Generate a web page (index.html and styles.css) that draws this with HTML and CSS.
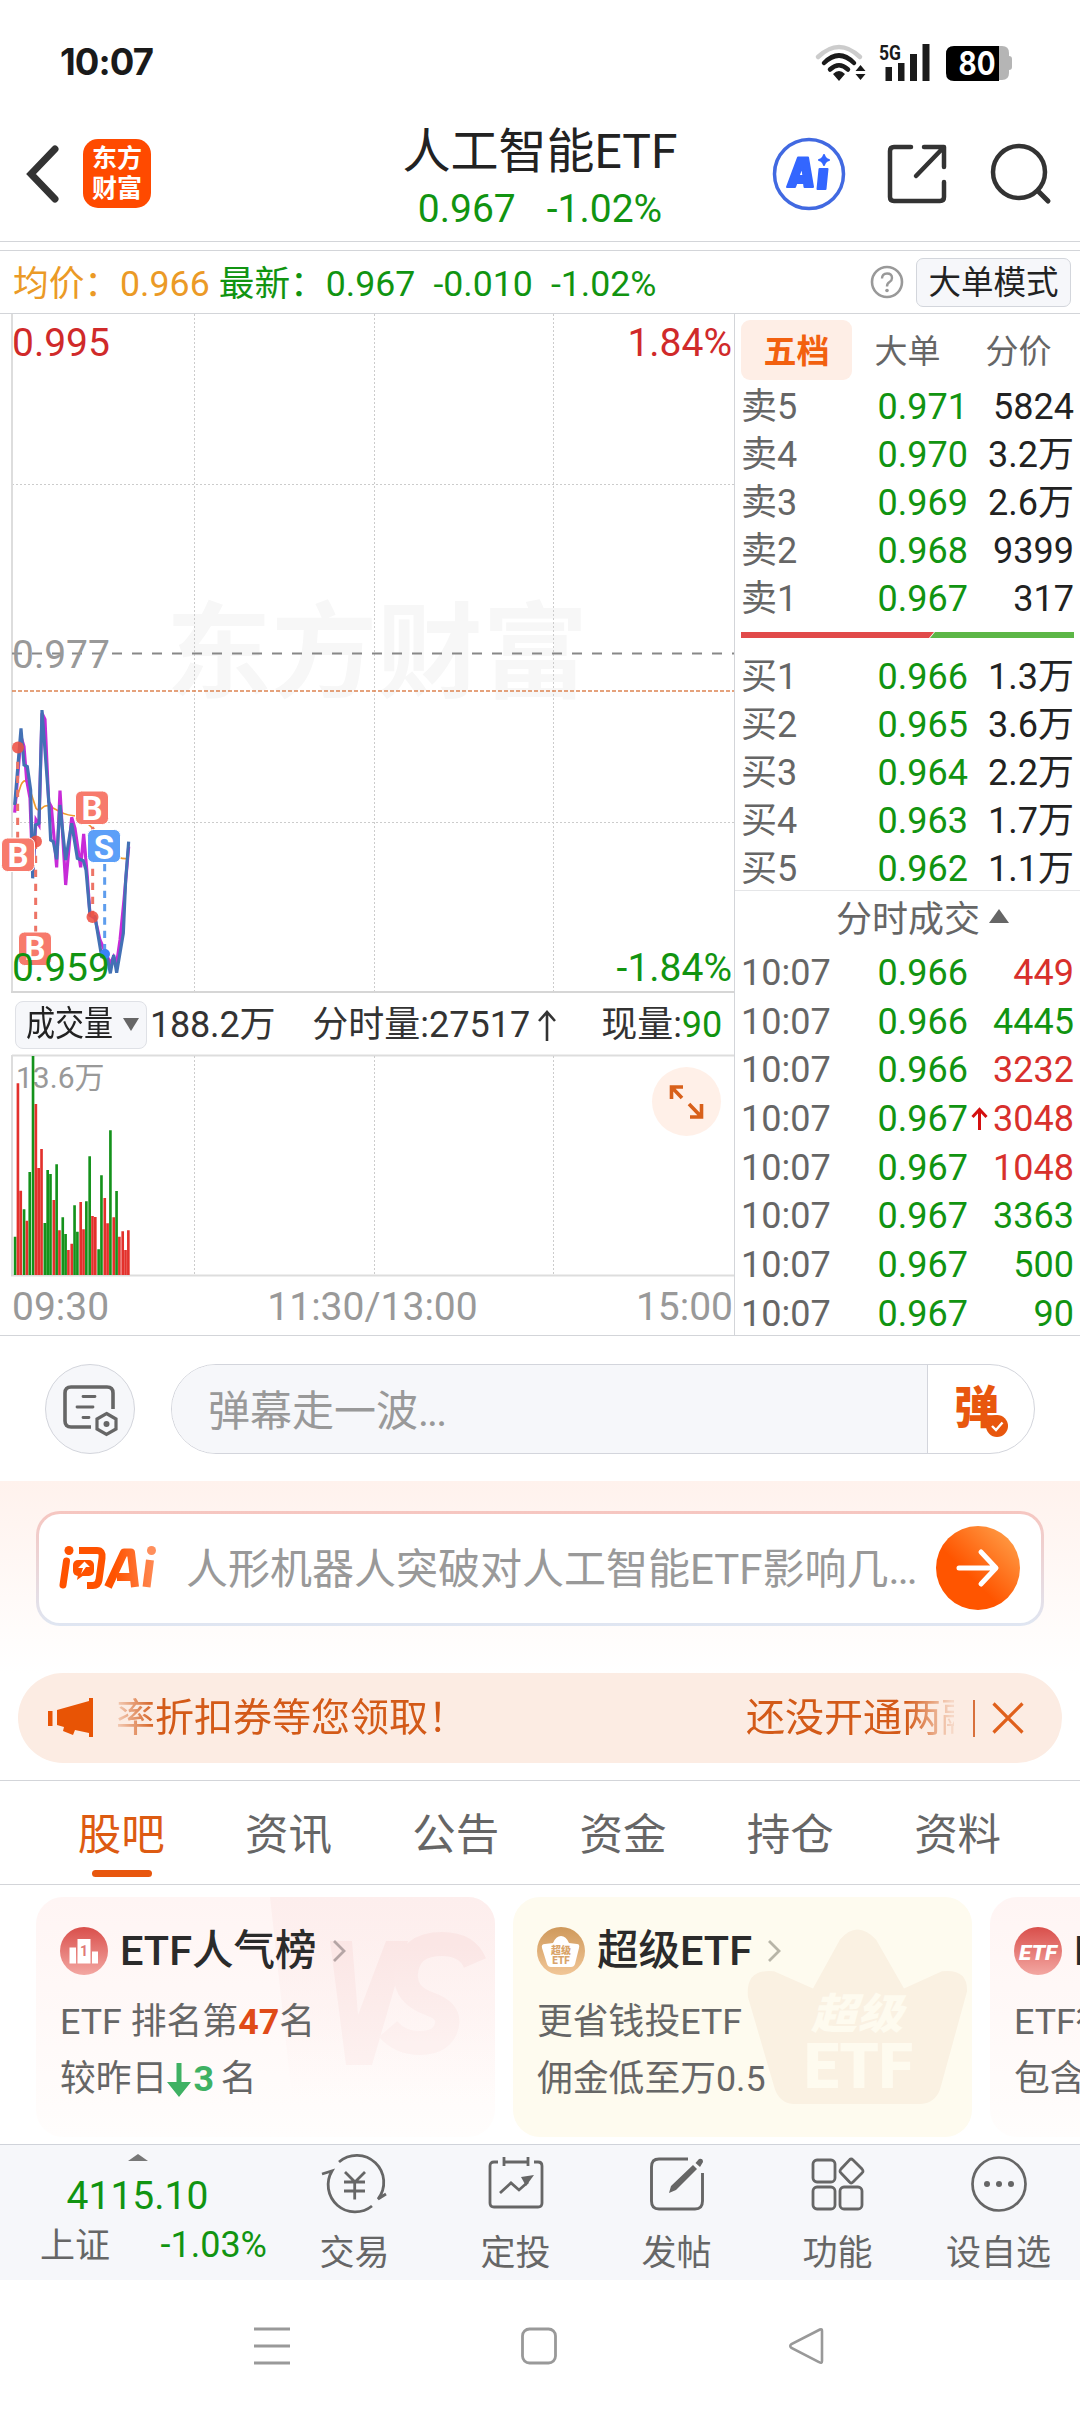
FILE: index.html
```html
<!DOCTYPE html>
<html lang="zh-CN">
<head>
<meta charset="utf-8">
<title>人工智能ETF</title>
<link rel="stylesheet" href="styles.css">
</head>
<body>
<div class="statusbar">
  <span class="clock">10:07</span>
  <svg class="status-icons" width="200" height="40" viewBox="0 0 200 40">
    <g fill="none" stroke-linecap="round" stroke-width="4.5">
      <path d="M4 14Q25-6 46 14" stroke="#ccc"/>
      <path d="M10 20Q25 5 40 20M16 26.500Q25 18 34 26.500" stroke="#1a1a1a"/>
    </g>
    <path d="M19 31Q25 25 31 31L25 38ZM41.500 28L46.500 22 51.500 28ZM41.500 31L46.500 37 51.500 31Z" fill="#1a1a1a"/>
    <text x="65" y="17" class="net" textLength="22" lengthAdjust="spacingAndGlyphs">5G</text>
    <path d="M71.500 24h6.500v14h-6.500zM84 20h6.500v18h-6.500zM96 11h7v27h-7zM108.500 1h7v37h-7z" fill="#1a1a1a"/>
    <path d="M184 3h4q7 0 7 7v3q3 0 3 3v8q0 3-3 3v3q0 7-7 7h-4z" fill="#b5b5b5"/>
    <path d="M140 3h45v35h-45q-8 0-8-8v-19q0-8 8-8z"/>
    <text x="144.500" y="31.500" class="batt" textLength="37" lengthAdjust="spacingAndGlyphs">80</text>
  </svg>
</div>

<header class="header">
  <div class="header-left">
    <svg width="36" height="60" viewBox="0 0 36 60"><path d="M31 5L7 30 31 55" fill="none" stroke="#333" stroke-width="7" stroke-linecap="round"/></svg>
    <div class="logo">东方<br>财富</div>
  </div>
  <div class="title">
    <h1>人工智能ETF</h1>
    <div class="title-quote"><span>0.967</span><span>-1.02%</span></div>
  </div>
  <div class="header-right">
    <svg width="74" height="76" viewBox="0 0 74 76">
      <circle cx="37" cy="38" r="34.500" fill="#fff" stroke="#4169e1" stroke-width="3.500"/>
      <g fill="#3366ff" stroke="#3366ff" stroke-width="2" stroke-linejoin="round">
        <path fill-rule="evenodd" d="M26 21.500H36L41 51H32.500L32 47H24.500L23 51H15ZM30 31L26.500 40H31.500Z"/>
        <path d="M47.500 33H55.500L53.500 53H45.500Z"/>
        <path d="M52 19Q53 23 57 24 53 25 52 29 51 25 47 24 51 23 52 19Z"/>
      </g>
    </svg>
    <svg width="60" height="60" viewBox="0 0 60 60"><path d="M24 3H7Q3 3 3 7V53Q3 57 7 57H53Q57 57 57 53V38M37 3H57V23M56 4L29 32" fill="none" stroke="#333" stroke-width="4.500" stroke-linecap="round" stroke-linejoin="round"/></svg>
    <svg width="62" height="64" viewBox="0 0 62 64"><circle cx="31" cy="30" r="26" fill="none" stroke="#333" stroke-width="4.500"/><path d="M50 49L60 59" stroke="#333" stroke-width="5" stroke-linecap="round"/></svg>
  </div>
</header>

<div class="summary">
  <span class="avg">均价：0.966</span>
  <span class="latest">最新：0.967</span>
  <span>-0.010</span>
  <span>-1.02%</span>
  <svg class="help" width="34" height="34" viewBox="0 0 34 34"><circle cx="17" cy="17" r="15" fill="none" stroke="#999" stroke-width="2.600"/><path d="M12 13.500Q12 8.500 17 8.500T22 13Q22 15.500 19.500 17T17 21.500" fill="none" stroke="#999" stroke-width="2.400"/><circle cx="17" cy="25.500" r="1.800" fill="#999"/></svg>
  <span class="mode">大单模式</span>
</div>

<main class="market">
  <section class="charts">
    <svg class="price-chart" width="734" height="680" viewBox="0 314 734 680">
      <text x="166" y="690" class="watermark" textLength="422" lengthAdjust="spacingAndGlyphs">东方财富</text>
      <g stroke="#ccc" stroke-dasharray="2 2">
        <path d="M194.500 314V992M374.500 314V992M553.500 314V992M12 484.500H734M12 822.500H734"/>
      </g>
      <path d="M12 314V992" stroke="#ddd" stroke-width="2"/>
      <path d="M11 992H734" stroke="#d6d6d6" stroke-width="2"/>
      <path d="M12 653.500H734" stroke="#888" stroke-width="1.800" stroke-dasharray="10 10"/>
      <path d="M12 691H734" stroke="#dd8452" stroke-width="1.600" stroke-dasharray="4 2"/>
      <g fill="none" transform="translate(0 580) scale(.33333)">
        <path d="M50 655L63 615Q75 590 85 615L108 685Q115 695 125 685 140 670 155 682L180 695Q200 708 240 708L278 745 310 765 340 820Q355 837 380 836" stroke="#f09a2c" stroke-width="5"/>
        <path d="M44 698L63 470 72 500 80 600 90 655 98 880 108 720 117 735 126 400 135 418 146 665 154 680 170 862 180 632 197 915 215 712 225 745 242 862 251 762 262 890 270 1005 285 1015 300 1080 322 1130 331 1150 341 1130 350 1150 360 1080 372 960 386 800" stroke="#c72bd8" stroke-width="9.500"/>
        <path d="M44 675L63 445 72 555 82 560 92 630 98 895 106 735 117 730 126 390 146 660 152 780 160 785 170 838 180 675 197 840 215 730 232 835 250 842 258 870 270 1005 285 1010 305 1130 322 1135 331 1180 341 1125 350 1178 370 1060 377 900 386 785" stroke="#4371b5" stroke-width="9.500"/>
        <g stroke="#ed7466" stroke-width="9" stroke-dasharray="22 20">
          <path d="M53 545V775M107 785V1060M278 740V1010"/>
        </g>
        <path d="M314 852V1110" stroke="#5e9ded" stroke-width="9" stroke-dasharray="22 18"/>
      </g>
      <g fill="#ee5144" opacity=".88"><circle cx="18" cy="747.500" r="6"/><circle cx="36" cy="841.500" r="6"/><circle cx="92.500" cy="917" r="6"/></g>
      <circle cx="105" cy="954" r="5" fill="#3b82f6"/>
      <g class="badge">
        <rect x="1.500" y="838" width="33" height="33.500" rx="6"/><text x="18" y="867">B</text>
        <rect x="18.500" y="932" width="33" height="33.500" rx="6"/><text x="35" y="960">B</text>
        <rect x="75.500" y="791" width="33" height="33.500" rx="6"/><text x="92" y="820">B</text>
        <rect x="87.500" y="829.500" width="33" height="33" rx="6" class="sell"/><text x="104" y="858.500">S</text>
      </g>
      <text x="12" y="355.500" class="axis red">0.995</text>
      <text x="732" y="355.500" class="axis red end">1.84%</text>
      <text x="12" y="668" class="axis gray">0.977</text>
      <text x="12" y="981" class="axis green">0.959</text>
      <text x="732" y="981" class="axis green end">-1.84%</text>
    </svg>
    <div class="indicator">
      <div class="picker"><b>成交量</b><i></i></div>
      <span class="v1">188.2万</span><span class="v2">分时量:27517<svg width="20" height="32" viewBox="0 0 20 32"><path d="M10 31V3M2 11L10 2 18 11" fill="none" stroke="#333" stroke-width="2.600"/></svg></span><span>现量:<em class="green">90</em></span>
    </div>
    <svg class="volume-chart" width="734" height="222" viewBox="0 1055 734 222">
      <path d="M12 1055.500H734" stroke="#ddd" stroke-width="2"/>
      <path d="M194.500 1056V1275M374.500 1056V1275M553.500 1056V1275" stroke="#ccc" stroke-dasharray="2 2"/>
      <path d="M12 1055V1275" stroke="#ddd" stroke-width="2"/>
      <path d="M11 1275.500H734" stroke="#ddd" stroke-width="2"/>
      <text x="16" y="1088" class="vol-max">13.6万</text>
      <g fill="none" stroke-width="5.600" transform="translate(0 980) scale(.4719 .33333)">
        <path stroke="#14921b" d="M32 770V885M51 688V885M63 576V885M70 228V885M95 729V885M101 570V885M107 582V885M120 553V885M133 712V885M139 762V885M158 676V885M164 755V885M183 664V885M190 529V885M209 808V885M215 586V885M234 451V885M247 633V885"/>
        <path stroke="#e3312c" d="M38 310V885M44 632V885M57 722V885M76 372V885M82 564V885M88 507V885M114 660V885M126 751V885M145 810V885M152 791V885M171 666V885M177 748V885M196 708V885M202 711V885M222 654V885M228 730V885M241 712V885M253 770V885M260 754V885M266 810V885M272 751V885"/>
      </g>
      <circle cx="686.500" cy="1101.500" r="34.500" fill="#fff0e8"/>
      <path d="M683 1087H671.500V1099M671.500 1087L682 1098M690 1117H701.500V1104M701.500 1117L689 1104" fill="none" stroke="#d8601a" stroke-width="3.600"/>
    </svg>
    <div class="times"><span>09:30</span><span>11:30/13:00</span><span>15:00</span></div>
  </section>

  <aside class="book">
    <div class="book-tabs"><span class="on">五档</span><span>大单</span><span>分价</span></div>
    <div class="levels">
      <div><span>卖5</span><b>0.971</b><em>5824</em></div>
      <div><span>卖4</span><b>0.970</b><em>3.2万</em></div>
      <div><span>卖3</span><b>0.969</b><em>2.6万</em></div>
      <div><span>卖2</span><b>0.968</b><em>9399</em></div>
      <div><span>卖1</span><b>0.967</b><em>317</em></div>
    </div>
    <svg class="ratio" width="333" height="6" viewBox="0 0 333 6"><path d="M0 0H193L188 6H0Z" fill="#e14a4a"/><path d="M194 0H333V6H189Z" fill="#5cb646"/></svg>
    <div class="levels buys">
      <div><span>买1</span><b>0.966</b><em>1.3万</em></div>
      <div><span>买2</span><b>0.965</b><em>3.6万</em></div>
      <div><span>买3</span><b>0.964</b><em>2.2万</em></div>
      <div><span>买4</span><b>0.963</b><em>1.7万</em></div>
      <div><span>买5</span><b>0.962</b><em>1.1万</em></div>
    </div>
    <div class="deals-title">分时成交<i></i></div>
    <div class="levels deals">
      <div><span>10:07</span><b>0.966</b><em class="red">449</em></div>
      <div><span>10:07</span><b>0.966</b><em class="green">4445</em></div>
      <div><span>10:07</span><b>0.966</b><em class="red">3232</em></div>
      <div><span>10:07</span><b>0.967</b><svg width="17" height="24" viewBox="0 0 17 24"><path d="M8.500 23V3M1.500 10L8.500 2.500 15.500 10" fill="none" stroke="#d40f0f" stroke-width="3"/></svg><em class="red">3048</em></div>
      <div><span>10:07</span><b>0.967</b><em class="red">1048</em></div>
      <div><span>10:07</span><b>0.967</b><em class="green">3363</em></div>
      <div><span>10:07</span><b>0.967</b><em class="green">500</em></div>
      <div><span>10:07</span><b>0.967</b><em class="green">90</em></div>
    </div>
  </aside>
</main>

<section class="bullet">
  <div class="bullet-set">
    <svg width="56" height="52" viewBox="0 0 56 52" fill="none" stroke="#666">
      <path d="M28 42H8Q2 42 2 36V8Q2 2 8 2H44Q50 2 50 8V24" stroke-width="3.600"/>
      <path d="M20 11.500H32M14 22H30M20 32.500H26" stroke-width="2.800" stroke-linecap="round"/>
      <path d="M43.500 28.500L53 34V44L43.500 49.500 34 44V34Z" stroke-width="3.200"/><circle cx="43.500" cy="39" r="3" fill="#666" stroke="none"/>
    </svg>
  </div>
  <div class="bullet-box">
    <div class="bullet-input">弹幕走一波<span class="dots">...</span></div>
    <div class="bullet-toggle"><b>弹</b><svg width="22" height="22" viewBox="0 0 22 22"><circle cx="11" cy="11" r="11" fill="#e8570e"/><path d="M6 11L10 15 16.500 7.500" fill="none" stroke="#fff" stroke-width="2.400"/></svg></div>
  </div>
</section>

<section class="ask">
  <div class="ask-box">
    <svg width="100" height="46" viewBox="0 0 100 46">
      <defs><linearGradient id="brand" x1="0" y1="0" x2="100" y2="0" gradientUnits="userSpaceOnUse"><stop offset=".55" stop-color="#ff5200"/><stop offset="1" stop-color="#ff8f5c"/></linearGradient></defs>
      <g fill="none" stroke="url(#brand)" stroke-linecap="round" stroke-linejoin="round">
        <path d="M7.500 15L4 39" stroke-width="7"/>
        <path d="M20 4.500H38Q44 4.500 43 12L40 34Q39 39.500 34 39.500H28" stroke-width="7" stroke-linecap="butt"/>
        <path d="M49 41L65 6.500H72L76 41M58 31H74" stroke-width="8" stroke-linecap="butt"/>
        <path d="M91 14L87.500 41" stroke-width="8" stroke-linecap="butt"/>
      </g>
      <circle cx="10" cy="4.500" r="4.500" fill="#ff5200"/><circle cx="92.500" cy="4.500" r="4.500" fill="#ff8f5c"/>
      <rect x="14" y="14" width="21" height="16" rx="5" fill="#ff5200"/><path d="M19 29L18 34 25 29Z" fill="#ff5200"/>
      <path d="M25.500 15.500L31 21H27L22 28 24 22H19Z" fill="#fff"/>
    </svg>
    <p>人形机器人突破对人工智能ETF影响几<span class="dots">...</span></p>
    <div class="go"><svg width="44" height="40" viewBox="0 0 44 40"><path d="M3 20H39M25 4L40 20 25 36" fill="none" stroke="#fff" stroke-width="5" stroke-linecap="round" stroke-linejoin="round"/></svg></div>
  </div>
</section>

<section class="notice">
  <svg width="46" height="40" viewBox="0 0 46 40" fill="#e85405"><path d="M0 13H4.500V28H0zM9 12L41 3V0H45V39H41V35L27 32 25 37 15 33 16 29 9 27Z"/></svg>
  <div class="marquee"><span>率折扣券等您领取！</span><span>还没开通两融</span></div>
  <i class="bar"></i>
  <svg width="32" height="32" viewBox="0 0 32 32"><path d="M1.500 1.500L30.500 30.500M30.500 1.500L1.500 30.500" stroke="#e0601c" stroke-width="3.200"/></svg>
</section>

<nav class="tabs"><span class="on">股吧</span><span>资讯</span><span>公告</span><span>资金</span><span>持仓</span><span>资料</span></nav>

<section class="cards">
  <article class="card rank">
    <svg class="deco" width="225" height="240" viewBox="0 0 225 240">
      <defs><linearGradient id="fade" x1="0" y1="0" x2="0" y2="1"><stop offset="0" stop-color="#fdeeed"/><stop offset="1" stop-color="#fdeeed" stop-opacity="0"/></linearGradient>
      <linearGradient id="vsfill" x1="0" y1="0" x2="0" y2="1"><stop offset="0" stop-color="#fbe6e5"/><stop offset="1" stop-color="#fdf1f0"/></linearGradient></defs>
      <path d="M0 0H225V200H22Z" fill="url(#fade)"/>
      <path d="M60 44H82L88 118 116 44H138L102 168H76Z" fill="url(#vsfill)"/>
      <path d="M205 66Q197 47 172 47 139 47 136 76 134 98 160 107 180 114 177 128 173 146 150 146 130 146 118 132" fill="none" stroke="url(#vsfill)" stroke-width="24"/>
    </svg>
    <h2><svg width="48" height="48" viewBox="0 0 48 48"><defs><linearGradient id="r" x1="0" y1="0" x2="0" y2="1"><stop offset="0" stop-color="#d94f4b"/><stop offset="1" stop-color="#f3a7a2"/></linearGradient></defs><circle cx="24" cy="24" r="24" fill="url(#r)"/><path d="M9.500 20.500H16V36.500H9.500zM17.500 12H30.500V36.500H17.500zM32 24.500H38V36.500H32z" fill="#fff"/><text x="24" y="29" class="one">1</text></svg>ETF人气榜<svg class="chev" width="14" height="24" viewBox="0 0 14 24"><path d="M2 2L12 12 2 22" fill="none" stroke="#b5a5a5" stroke-width="2.800"/></svg></h2>
    <p>ETF 排名第<b class="hot">47</b>名</p>
    <p>较昨日<svg width="24" height="34" viewBox="0 0 24 34"><path d="M9.500 0H14.500V19H24L12 34 0 19H9.500Z" fill="#3fb163"/></svg><b class="down">3</b> 名</p>
  </article>
  <article class="card super">
    <svg class="deco" width="221" height="177" viewBox="0 0 221 184" preserveAspectRatio="none">
      <path d="M66 63L93 12Q110-9 129 12L157 63 195 45Q221 42 220 66L193 168Q188 182 174 183H46Q33 182 28 168L1 72Q-2 42 27 45Z" fill="#faf1e2"/>
      <text x="64" y="105" class="crown1" textLength="92" lengthAdjust="spacingAndGlyphs">超级</text><text x="57" y="166" class="crown2" textLength="109" lengthAdjust="spacingAndGlyphs">ETF</text>
    </svg>
    <h2><svg width="48" height="48" viewBox="0 0 48 48"><defs><linearGradient id="o" x1="0" y1="0" x2="0" y2="1"><stop offset="0" stop-color="#cf995b"/><stop offset="1" stop-color="#f1c697"/></linearGradient></defs><circle cx="24" cy="24" r="24" fill="url(#o)"/><path d="M16 16Q19 9 24 9T32 16L40 17Q43 17 42 21L38 37Q37 40 34 40H14Q11 40 10 37L5 21Q4 17 8 17Z" fill="#fff"/><text x="24" y="27" class="mini">超级</text><text x="24" y="37" class="mini">ETF</text></svg>超级ETF<svg class="chev" width="14" height="24" viewBox="0 0 14 24"><path d="M2 2L12 12 2 22" fill="none" stroke="#b8b5a8" stroke-width="2.800"/></svg></h2>
    <p>更省钱投ETF</p>
    <p>佣金低至万0.5</p>
  </article>
  <article class="card etf">
    <h2><svg width="48" height="48" viewBox="0 0 48 48"><circle cx="24" cy="24" r="24" fill="url(#r)"/><text x="24" y="33" class="etf-mark" textLength="38" lengthAdjust="spacingAndGlyphs">ETF</text></svg>ETF行情</h2>
    <p>ETF行情</p>
    <p>包含</p>
  </article>
</section>

<footer class="toolbar">
  <div class="index">
    <i></i>
    <strong>4115.10</strong>
    <div><span>上证</span><em>-1.03%</em></div>
  </div>
  <div class="tool"><svg width="68" height="58" viewBox="0 0 68 58" fill="none" stroke="#666" stroke-width="2.800"><path d="M18 7A27 27 0 0 1 57 44L65 39M51 51A27 27 0 0 1 11 16L1 19"/><path d="M24 17L34 27 44 17M23 27H44M23 36H44M33.700 27V44.500"/></svg>交易</div>
  <div class="tool"><svg width="56" height="58" viewBox="0 0 56 58" fill="none" stroke="#666" stroke-width="2.800"><path d="M10 7H6Q2 7 2 11V48Q2 52 6 52H50Q54 52 54 48V11Q54 7 50 7H46M16 2V11M16 7H40M40 2V11"/><path d="M12 38L23 28 31 35 40 27"/><path d="M33 22L46 20 38 31Z" fill="#666" stroke="none"/></svg>定投</div>
  <div class="tool"><svg width="56" height="58" viewBox="0 0 56 58" fill="none" stroke="#666" stroke-width="2.900"><path d="M39 4H10Q2.500 4 2.500 12V46Q2.500 54 10 54H46Q53.500 54 53.500 46V18"/><path d="M20 38L22 31 44 10 48 14 27 35ZM46.500 8L50 4Q54 3 54 7L51 12Z" fill="#666" stroke="none"/></svg>发帖</div>
  <div class="tool"><svg width="56" height="58" viewBox="0 0 56 58" fill="none" stroke="#666" stroke-width="2.800"><rect x="3" y="5" width="22" height="22" rx="4"/><rect x="3" y="32" width="22" height="22" rx="4"/><rect x="30" y="32" width="22" height="22" rx="4"/><path d="M41 4Q42 4 43 5L52 14Q54 16.500 52 18L43 27Q41 29 39.500 27L31 18Q29 16.500 31 14L39.500 5Q40 4 41 4Z"/></svg>功能</div>
  <div class="tool"><svg width="58" height="58" viewBox="0 0 58 58" fill="none" stroke="#666" stroke-width="2.700"><circle cx="29" cy="29" r="26.500"/><g fill="#666" stroke="none"><circle cx="17" cy="29" r="3"/><circle cx="29" cy="29" r="3"/><circle cx="41" cy="29" r="3"/></g></svg>设自选</div>
</footer>

<div class="sysnav">
  <svg width="36" height="38" viewBox="0 0 36 38"><path d="M0 2H36M0 19H36M0 36H36" stroke="#999" stroke-width="3"/></svg>
  <svg width="36" height="38" viewBox="0 0 36 38"><rect x="1.500" y="2" width="33" height="34" rx="7" fill="none" stroke="#999" stroke-width="2.800"/></svg>
  <svg width="36" height="38" viewBox="0 0 36 38"><path d="M32 2.500Q34 1.500 34 4V34Q34 37 31 35L3.500 21Q1 19 3.500 17Z" fill="none" stroke="#999" stroke-width="2.600"/></svg>
</div>
</body>
</html>
```

FILE: styles.css
```css
* { box-sizing: border-box; }
body { margin: 0; width: 1080px; height: 2412px; overflow: hidden; background: #fff; color: #222; font: 36px/1.2 Roboto, "Noto Sans CJK SC", sans-serif; }
h1, h2, p { margin: 0; font-weight: 400; }
em, i { font-style: normal; }
svg { display: block; flex: none; overflow: visible; }
.red { color: #d8302c; fill: #d02a2a; }
.green { color: #119411; fill: #119411; }
.gray { fill: #999; }
.dots { letter-spacing: -2px; }

.statusbar { height: 126px; padding: 0 66px 0 60px; display: flex; align-items: center; justify-content: space-between; }
.clock { font: 700 36.500px/40px Inter, sans-serif; color: #1a1a1a; letter-spacing: -.9px; margin-top: -2px; }
.net { font: 700 21px Roboto, sans-serif; fill: #1a1a1a; }
.batt { font: 700 32px Inter, sans-serif; fill: #fff; }

.header { height: 116px; display: grid; grid-template-columns: 300px 1fr 300px; border-bottom: 1px solid #d3d5d9; }
.header-left { display: flex; align-items: center; padding: 0 0 20px 24px; gap: 23px; }
.logo { width: 68px; height: 69px; border-radius: 15px; background: #ff4a00; color: #fff; font-weight: 700; font-size: 25px; line-height: 30px; text-align: center; padding-top: 5px; }
.title { text-align: center; margin-top: -3px; color: #222; }
.title h1 { font-size: 48px; line-height: 58px; }
.title-quote { display: flex; justify-content: center; gap: 31px; font-size: 39px; line-height: 57px; color: #119411; }
.header-right { display: flex; align-items: center; padding: 0 0 20px; margin-left: -8px; gap: 41px; }

.summary { height: 64px; margin-top: 8px; border-top: 1px solid #d3d5d9; border-bottom: 1px solid #d3d5d9; display: flex; align-items: center; padding: 4px 9px 0 13px; color: #119411; font-size: 35.700px; white-space: nowrap; }
.summary .avg { color: #eb9a26; margin-right: 9px; }
.summary .latest, .summary .latest + span { margin-right: 18px; }
.summary .help { margin: 0 12px 0 auto; position: relative; top: -2px; }
.summary .mode { width: 155px; height: 49px; margin-top: -4px; border: 1px solid #d3d6dc; border-radius: 7px; background: #f6f7fa; color: #222; font-size: 32.500px; line-height: 49px; text-align: center; }

.market { display: flex; height: 1022px; border-bottom: 1px solid #d3d5d9; }
.charts { width: 734px; }
.axis { font-size: 39px; }
.end { text-anchor: end; }
.watermark { font-size: 104px; font-weight: 700; fill: #f7f7f7; }
.badge rect { fill: #f77a6c; stroke: #fff; stroke-width: 1; }
.badge .sell { fill: #5c9ff8; }
.badge text { fill: #fff; font: 700 33px Roboto, sans-serif; text-anchor: middle; }
.indicator { height: 61px; display: flex; align-items: center; padding: 2px 0 0 15px; color: #333; white-space: nowrap; }
.picker { width: 132px; height: 48px; margin-top: -2px; border: 1px solid #dfe1e6; border-radius: 8px; background: #f6f7fa; display: flex; align-items: center; justify-content: space-between; padding: 0 7px 0 10px; margin-right: 3px; }
.picker b { font-weight: 400; width: 88px; transform: scaleX(.83); transform-origin: left; color: #222; font-size: 35px; }
.picker i { border: 8px solid transparent; border-top: 13px solid #666; border-bottom: 0; }
.v1 { margin-right: 37px; letter-spacing: -.2px; }
.v2 { display: flex; align-items: center; margin-right: 44px; }
.v2 svg { margin-left: 7px; }
.vol-max { font-size: 30px; fill: #999; }
.times { height: 58px; padding: 2px 1px 0 12px; display: flex; align-items: center; justify-content: space-between; font-size: 39px; line-height: 54px; color: #999; }

.book { width: 346px; border-left: 1px solid #d3d5d9; padding: 0 6px 0 6px; }
.book-tabs { height: 69px; padding-top: 6px; display: flex; color: #666; font-size: 33px; line-height: 63px; }
.book-tabs span { width: 111px; height: 60px; text-align: center; }
.book-tabs .on { background: #feeee6; border-radius: 9px; color: #f2600f; font-weight: 700; }
.levels div { height: 48px; line-height: 49px; display: flex; justify-content: flex-end; position: relative; }
.levels span { color: #666; margin: 0 auto 0 0; }
.levels b { color: #119411; font-weight: 400; }
.levels em { width: 106px; text-align: right; }
.ratio { margin: 9px 0 15px; }
.buys { height: 237px; }
.deals-title { height: 58px; margin: 0 -6px; border-top: 1px solid #e5e6e8; display: flex; justify-content: flex-start; align-items: center; gap: 9px; color: #666; padding: 3px 0 0 101px; }
.deals-title i { border: 10.500px solid transparent; border-bottom: 14px solid #666; border-top: 0; margin-top: -10px; }
.deals div { height: 48.700px; line-height: 51px; }
.deals svg { position: absolute; left: 230px; top: 13px; }

.bullet { height: 145px; padding: 28px 45px 0; display: flex; gap: 36px; }
.bullet-set { width: 90px; height: 90px; border: 1px solid #d3d5dc; border-radius: 50%; background: #f6f7fa; display: grid; place-items: center; }
.bullet-set svg { margin: 4px 0 0 2px; }
.bullet-box { width: 864px; height: 90px; border: 1px solid #d3d5dc; border-radius: 45px; overflow: hidden; display: flex; }
.bullet-input { flex: 1; background: #f6f7fa; padding-left: 36px; font-size: 42px; line-height: 93px; color: #999; }
.bullet-toggle { width: 107px; border-left: 1px solid #d3d5dc; display: flex; align-items: center; padding-left: 26px; color: #e8570e; }
.bullet-toggle b { font-size: 45px; font-weight: 900; }
.bullet-toggle svg { margin: 34px 0 0 -13px; border-radius: 50%; }

.ask { height: 192px; padding: 30px 36px 0; background: linear-gradient(#fff2ed, #fff); }
.ask-box { height: 115px; border: 3px solid transparent; border-radius: 24px; background: linear-gradient(#fff, #fff) padding-box, linear-gradient(#f6c6c0, #dfe6f2) border-box; display: flex; align-items: center; padding-left: 20px; }
.ask-box p { margin: 3px 0 0 27px; width: 750px; font-size: 42px; color: #999; white-space: nowrap; }
.go { width: 84px; height: 84px; margin: -2px 0 0; border-radius: 50%; background: linear-gradient(225deg, #ff9b45 10%, #ff5500 60%); display: grid; place-items: center; }

.notice { height: 90px; margin: 0 18px; padding: 0 38px 0 30px; border-radius: 45px; background: #fcece3; display: flex; align-items: center; color: #d35a18; font-size: 39px; }
.marquee { margin: 1px 0 0 22px; width: 839px; display: flex; justify-content: space-between; overflow: hidden; white-space: nowrap; -webkit-mask: linear-gradient(90deg, #0003, #000 40px, #000 790px, #0002 836px); mask: linear-gradient(90deg, #0003, #000 40px, #000 790px, #0002 836px); }
.marquee span:last-child { width: 208px; }
.notice .bar { width: 2px; height: 37px; background: #d8703c; margin: 0 17px 0 19px; }

.tabs { height: 105px; margin-top: 17px; border-top: 1px solid #d3d5d9; border-bottom: 1px solid #d3d5d9; padding-left: 37.500px; display: flex; font-size: 43.500px; line-height: 110px; color: #666; }
.tabs span { width: 167.300px; text-align: center; position: relative; }
.tabs .on { color: #dd5b12; }
.tabs .on::after { content: ""; position: absolute; left: 54px; top: 89px; width: 60px; height: 7px; border-radius: 4px; background: #e8570e; }

.cards { height: 259px; padding: 12px 0 0 36px; display: flex; gap: 18px; overflow: hidden; }
.card { flex: none; width: 459px; height: 240px; border-radius: 27px; padding: 25px 0 0 24px; position: relative; overflow: hidden; color: #666; }
.card > h2, .card > p { position: relative; white-space: nowrap; }
.card h2 { display: flex; align-items: center; height: 58px; gap: 12px; color: #2b2b2b; font-size: 41.500px; font-weight: 500; line-height: 60px; }
.card .chev { margin-left: 3px; }
.card p { display: flex; align-items: center; height: 57px; line-height: 60px; font-size: 35.800px; white-space: pre; }
.card h2 + p { margin-top: 13px; }
.rank, .etf { background: linear-gradient(#fff5f4, #fffdfc); }
.super { background: #fefbef; }
.deco { position: absolute; }
.rank .deco { right: 0; top: 0; }
.super .deco { right: 4px; top: 31px; }
.crown1 { font-size: 44px; font-weight: 900; font-style: italic; fill: #fefbef; }
.crown2 { font: 900 66px Roboto, sans-serif; fill: #fefbef; }
.one { font: 700 14px Roboto, sans-serif; fill: #e07a76; text-anchor: middle; }
.mini { font-size: 10px; font-weight: 900; fill: #d9a46a; text-anchor: middle; }
.etf-mark { font: italic 900 21px Roboto, sans-serif; fill: #fff; text-anchor: middle; }
.hot { color: #e04a18; }
.down { color: #3fb163; margin-right: -2px; }
.card p svg { margin: 3px 2px 0 0; }

.toolbar { height: 136px; border-top: 1px solid #d0d3da; background: #f6f7fa; display: flex; color: #666; }
.index { width: 275px; text-align: center; display: flex; flex-direction: column; align-items: center; }
.index i { border: 10px solid transparent; border-bottom: 7px solid #777; border-top: 0; margin-top: 9px; }
.index strong { font-weight: 400; font-size: 39px; line-height: 52px; color: #119411; margin-top: 9px; }
.index div { width: 227px; margin-left: 32px; display: flex; justify-content: space-between; line-height: 46px; }
.index em { color: #119411; }
.index span { font-size: 35px; line-height: 50px; }
.tool { width: 161px; margin-left: -1px; margin-right: 1px; display: flex; flex-direction: column; align-items: center; font-size: 35px; line-height: 51px; padding-top: 10px; gap: 15px; }
.tool svg { height: 58px; }

.sysnav { height: 132px; padding: 0 256px 0 254px; display: flex; justify-content: space-between; align-items: center; }
```
